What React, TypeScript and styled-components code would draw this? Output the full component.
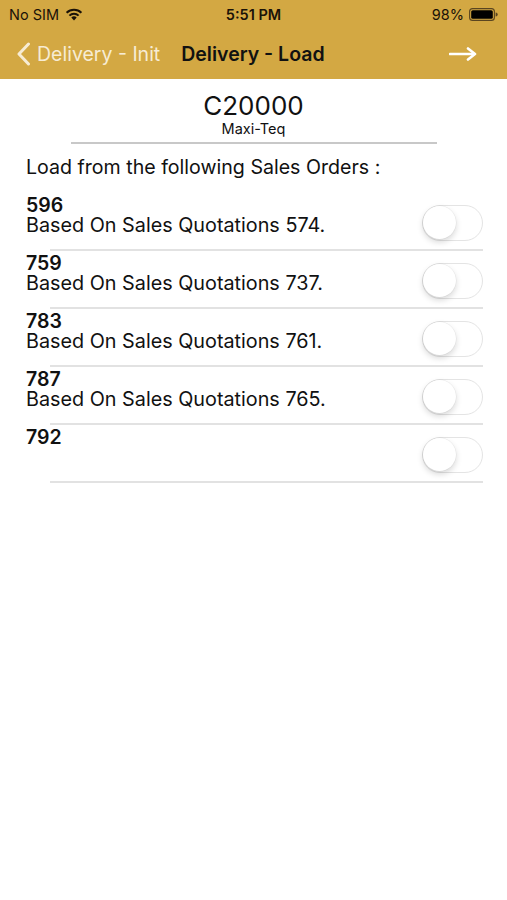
import React from "react";
import styled, { createGlobalStyle } from "styled-components";

const Global = createGlobalStyle`
  html, body { margin: 0; padding: 0; background: #ffffff; }
  body { font-family: "Inter", "Liberation Sans", Arial, sans-serif; color: #111; }
  * { box-sizing: border-box; }
`;

const Page = styled.div`
  width: 507px;
  min-height: 900px;
  background: #fff;
`;

const Header = styled.header`
  background: #d3a843;
`;

const StatusBar = styled.div`
  height: 28px;
  display: grid;
  grid-template-columns: 1fr auto 1fr;
  align-items: center;
  padding: 0 9px 0 9px;
  font-size: 14.5px;
  color: #1a1208;
`;

const StatusLeft = styled.div`
  display: flex;
  align-items: center;
  gap: 6px;
`;

const StatusTime = styled.div`
  font-weight: 600;
`;

const StatusRight = styled.div`
  display: flex;
  align-items: center;
  justify-content: flex-end;
  gap: 5px;
`;

const NavBar = styled.nav`
  height: 51px;
  display: flex;
  align-items: center;
  padding: 0 0 0 16px;
`;

const BackButton = styled.div`
  display: flex;
  align-items: center;
  gap: 6px;
  color: #f7ecd4;
  font-size: 19.5px;
`;

const NavTitle = styled.div`
  margin-left: 21px;
  font-size: 19.5px;
  font-weight: 600;
  color: #111;
`;

const NavAction = styled.div`
  margin-left: auto;
  margin-right: 30px;
  display: flex;
  align-items: center;
`;

const Customer = styled.section`
  display: flex;
  flex-direction: column;
  align-items: center;
  padding-top: 13px;
`;

const CustomerCode = styled.div`
  font-size: 26px;
  line-height: 28px;
  font-weight: 400;
  color: #111;
`;

const CustomerName = styled.div`
  font-size: 14.5px;
  line-height: 17px;
  color: #111;
`;

const Rule = styled.div`
  width: 366px;
  height: 2px;
  background: #c8c8c8;
  margin-top: 5px;
`;

const Caption = styled.div`
  margin: 11px 0 0 26px;
  font-size: 19.6px;
  line-height: 24px;
  color: #111;
`;

const List = styled.ul`
  list-style: none;
  margin: 14px 0 0 0;
  padding: 0;
`;

const Row = styled.li`
  position: relative;
  height: 58px;
  display: flex;
  align-items: center;
  padding: 0 24px 0 26px;
  &::after {
    content: "";
    position: absolute;
    left: 50px;
    right: 24px;
    bottom: 0;
    height: 2px;
    background: #e2e2e2;
  }
`;

const RowText = styled.div`
  flex: 1;
  align-self: flex-start;
  padding-top: 2px;
`;

const OrderNo = styled.div`
  font-size: 19.5px;
  line-height: 20px;
  font-weight: 600;
  color: #111;
`;

const OrderDesc = styled.div`
  font-size: 19.8px;
  line-height: 20px;
  color: #111;
`;

const Switch = styled.div<{ $on?: boolean }>`
  width: 61px;
  height: 36px;
  border-radius: 18px;
  border: 1.5px solid #e4e4e4;
  background: ${(p) => (p.$on ? "#4cd964" : "#fff")};
  position: relative;
  flex-shrink: 0;
  margin-top: 1px;
`;

const Knob = styled.div`
  position: absolute;
  left: 0px;
  top: 0px;
  width: 33px;
  height: 33px;
  border-radius: 50%;
  background: #fff;
  box-shadow: 0 3px 6px rgba(0, 0, 0, 0.16), 0 0 0 0.5px rgba(0, 0, 0, 0.06);
`;

const Wifi = () => (
  <svg width="18" height="13" viewBox="0 0 18 13">
    <path d="M9 12.5 L6.3 9.6 A3.9 3.9 0 0 1 11.7 9.6 Z" fill="#1a1208" />
    <path d="M4.4 7.6 A6.6 6.6 0 0 1 13.6 7.6" stroke="#1a1208" strokeWidth="2" fill="none" />
    <path d="M1.6 4.7 A10.6 10.6 0 0 1 16.4 4.7" stroke="#1a1208" strokeWidth="2" fill="none" />
  </svg>
);

const Battery = () => (
  <svg width="29" height="13" viewBox="0 0 29 13">
    <rect x="0.6" y="0.6" width="24.8" height="11.8" rx="3" fill="none" stroke="#5a4520" strokeWidth="1.1" />
    <rect x="2.2" y="2.2" width="21.6" height="8.6" rx="1.6" fill="#000" />
    <path d="M26.6 4.4 a2 2 0 0 1 0 4.2 z" fill="#5a4520" />
  </svg>
);

const Chevron = () => (
  <svg width="15" height="24" viewBox="0 0 15 24">
    <path d="M12.5 2 L3 12 L12.5 22" stroke="#f7ecd4" strokeWidth="3" fill="none" strokeLinecap="round" strokeLinejoin="round" />
  </svg>
);

const Arrow = () => (
  <svg width="28" height="14" viewBox="0 0 28 14">
    <path d="M1 7 H25" stroke="#fff" strokeWidth="2.6" strokeLinecap="round" />
    <path d="M19 1.5 L26 7 L19 12.5" stroke="#fff" strokeWidth="2.6" fill="none" strokeLinecap="round" strokeLinejoin="round" />
  </svg>
);

const orders = [
  { no: "596", desc: "Based On Sales Quotations 574." },
  { no: "759", desc: "Based On Sales Quotations 737." },
  { no: "783", desc: "Based On Sales Quotations 761." },
  { no: "787", desc: "Based On Sales Quotations 765." },
  { no: "792", desc: "" },
];

export default function App() {
  return (
    <Page>
      <Global />
      <Header>
        <StatusBar>
          <StatusLeft>
            <span>No SIM</span>
            <Wifi />
          </StatusLeft>
          <StatusTime>5:51 PM</StatusTime>
          <StatusRight>
            <span>98%</span>
            <Battery />
          </StatusRight>
        </StatusBar>
        <NavBar>
          <BackButton>
            <Chevron />
            <span>Delivery - Init</span>
          </BackButton>
          <NavTitle>Delivery - Load</NavTitle>
          <NavAction>
            <Arrow />
          </NavAction>
        </NavBar>
      </Header>
      <Customer>
        <CustomerCode>C20000</CustomerCode>
        <CustomerName>Maxi-Teq</CustomerName>
        <Rule />
      </Customer>
      <Caption>Load from the following Sales Orders :</Caption>
      <List>
        {orders.map((o) => (
          <Row key={o.no}>
            <RowText>
              <OrderNo>{o.no}</OrderNo>
              {o.desc && <OrderDesc>{o.desc}</OrderDesc>}
            </RowText>
            <Switch>
              <Knob />
            </Switch>
          </Row>
        ))}
      </List>
    </Page>
  );
}
